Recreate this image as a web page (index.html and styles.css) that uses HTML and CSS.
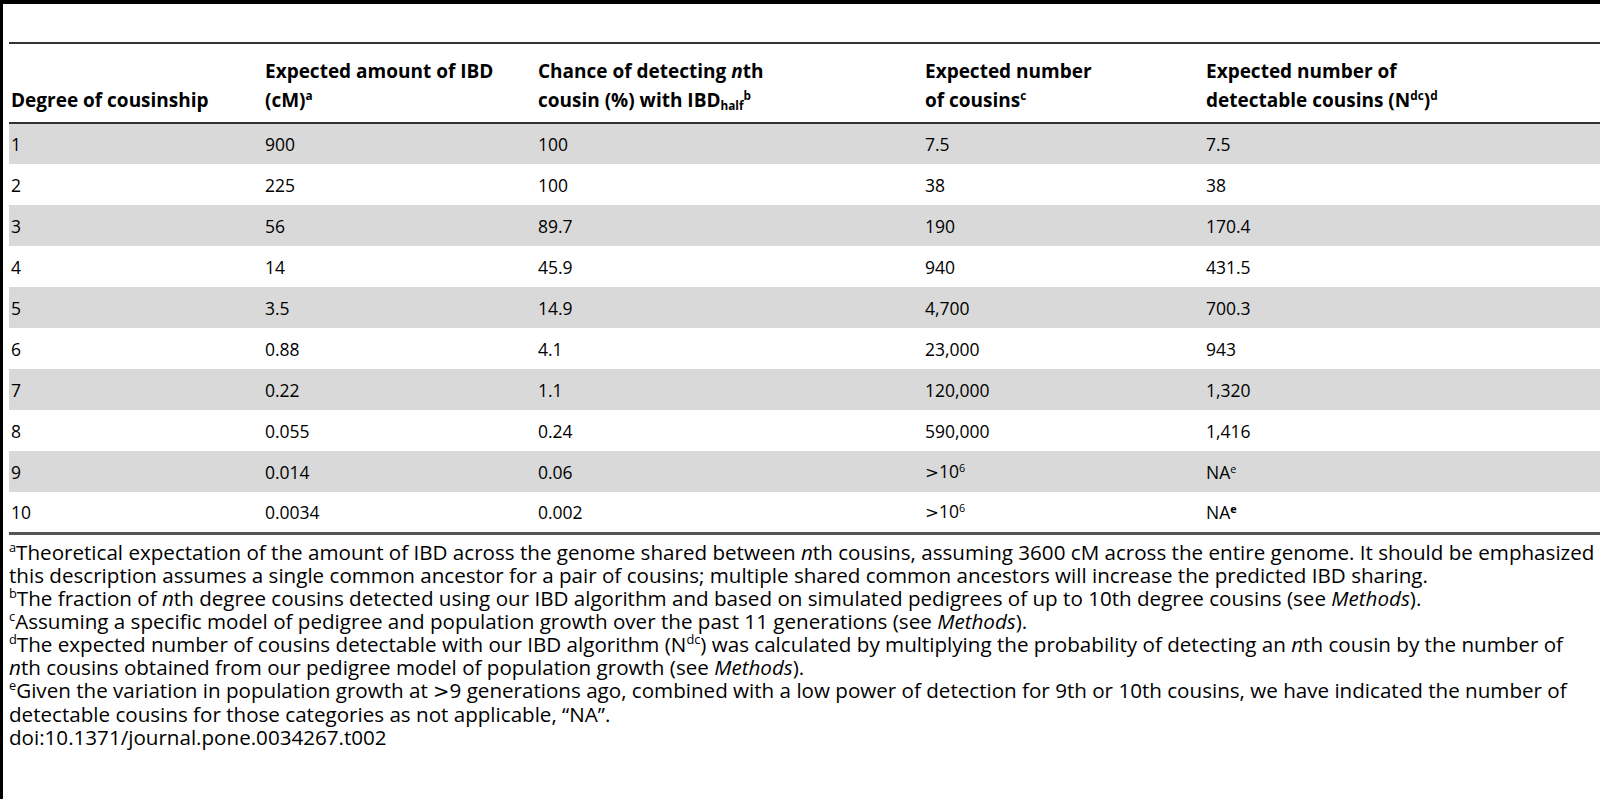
FILE: index.html
```html
<!DOCTYPE html>
<html lang="en">
<head>
<meta charset="utf-8">
<title>Table 2</title>
<link rel="stylesheet" href="styles.css">
</head>
<body>
<div class="page">
  <table class="data">
    <colgroup>
      <col class="c1"><col class="c2"><col class="c3"><col class="c4"><col class="c5">
    </colgroup>
    <thead>
      <tr>
        <th>Degree of cousinship</th>
        <th>Expected amount of IBD<br>(cM)<sup>a</sup></th>
        <th>Chance of detecting <i>n</i>th<br>cousin (%) with IBD<sub>half</sub><sup>b</sup></th>
        <th>Expected number<br>of cousins<sup>c</sup></th>
        <th>Expected number of<br>detectable cousins (N<sup>dc</sup>)<sup>d</sup></th>
      </tr>
    </thead>
    <tbody>
      <tr class="shade"><td>1</td><td>900</td><td>100</td><td>7.5</td><td>7.5</td></tr>
      <tr><td>2</td><td>225</td><td>100</td><td>38</td><td>38</td></tr>
      <tr class="shade"><td>3</td><td>56</td><td>89.7</td><td>190</td><td>170.4</td></tr>
      <tr><td>4</td><td>14</td><td>45.9</td><td>940</td><td>431.5</td></tr>
      <tr class="shade"><td>5</td><td>3.5</td><td>14.9</td><td>4,700</td><td>700.3</td></tr>
      <tr><td>6</td><td>0.88</td><td>4.1</td><td>23,000</td><td>943</td></tr>
      <tr class="shade"><td>7</td><td>0.22</td><td>1.1</td><td>120,000</td><td>1,320</td></tr>
      <tr><td>8</td><td>0.055</td><td>0.24</td><td>590,000</td><td>1,416</td></tr>
      <tr class="shade"><td>9</td><td>0.014</td><td>0.06</td><td><span class="gt">&gt;</span>10<sup>6</sup></td><td>NA<sup>e</sup></td></tr>
      <tr class="last"><td>10</td><td>0.0034</td><td>0.002</td><td><span class="gt">&gt;</span>10<sup>6</sup></td><td>NA<sup class="strong">e</sup></td></tr>
    </tbody>
  </table>
  <div class="notes">
    <p><sup>a</sup>Theoretical expectation of the amount of IBD across the genome shared between <i>n</i>th cousins, assuming 3600 cM across the entire genome. It should be emphasized<br>this description assumes a single common ancestor for a pair of cousins; multiple shared common ancestors will increase the predicted IBD sharing.</p>
    <p><sup>b</sup>The fraction of <i>n</i>th degree cousins detected using our IBD algorithm and based on simulated pedigrees of up to 10th degree cousins (see <i>Methods</i>).</p>
    <p><sup>c</sup>Assuming a specific model of pedigree and population growth over the past 11 generations (see <i>Methods</i>).</p>
    <p><sup>d</sup>The expected number of cousins detectable with our IBD algorithm (N<sup>dc</sup>) was calculated by multiplying the probability of detecting an <i>n</i>th cousin by the number of<br><i>n</i>th cousins obtained from our pedigree model of population growth (see <i>Methods</i>).</p>
    <p><sup>e</sup>Given the variation in population growth at <span class="gt">&gt;</span>9 generations ago, combined with a low power of detection for 9th or 10th cousins, we have indicated the number of<br>detectable cousins for those categories as not applicable, &#8220;NA&#8221;.</p>
    <p>doi:10.1371/journal.pone.0034267.t002</p>
  </div>
</div>
</body>
</html>
```

FILE: styles.css
```css
html, body {
  margin: 0;
  padding: 0;
  background: #fff;
}

body {
  font-family: "Open Sans", "Noto Sans", sans-serif;
  color: #000;
}

.page {
  box-sizing: border-box;
  width: 1600px;
  height: 799px;
  border-left: 3px solid #000;
  border-top: 4px solid #000;
  padding: 38px 0 0 6px;
  overflow: hidden;
}

.data {
  width: 100%;
  border-collapse: collapse;
  table-layout: fixed;
}

.c1 { width: 254px; }
.c2 { width: 273px; }
.c3 { width: 387px; }
.c4 { width: 281px; }
.c5 { width: auto; }

.data th {
  font-size: 19px;
  font-weight: 700;
  line-height: 29px;
  text-align: left;
  vertical-align: bottom;
  height: 80px;
  box-sizing: border-box;
  padding: 0 2px 7px 2px;
  border-top: 2px solid #333;
  border-bottom: 2px solid #333;
  white-space: nowrap;
}

.data td {
  font-size: 17.5px;
  line-height: 24px;
  height: 41px;
  box-sizing: border-box;
  padding: 0 2px;
  vertical-align: middle;
  white-space: nowrap;
}

.data tr.shade td {
  background: #d9d9d9;
}

.data tr.last td {
  border-bottom: 3px solid #555;
}

sup, sub {
  font-size: 0.62em;
  line-height: 0;
}

sup { vertical-align: 0.6em; }
sub { vertical-align: -0.25em; }

.strong { font-weight: 700; }

.gt {
  font-family: "DejaVu Sans", sans-serif;
  font-size: 0.95em;
}

.notes {
  margin-top: 6px;
  font-size: 20.6px;
  line-height: 23px;
  white-space: nowrap;
}

.notes p {
  margin: 0;
}
```
